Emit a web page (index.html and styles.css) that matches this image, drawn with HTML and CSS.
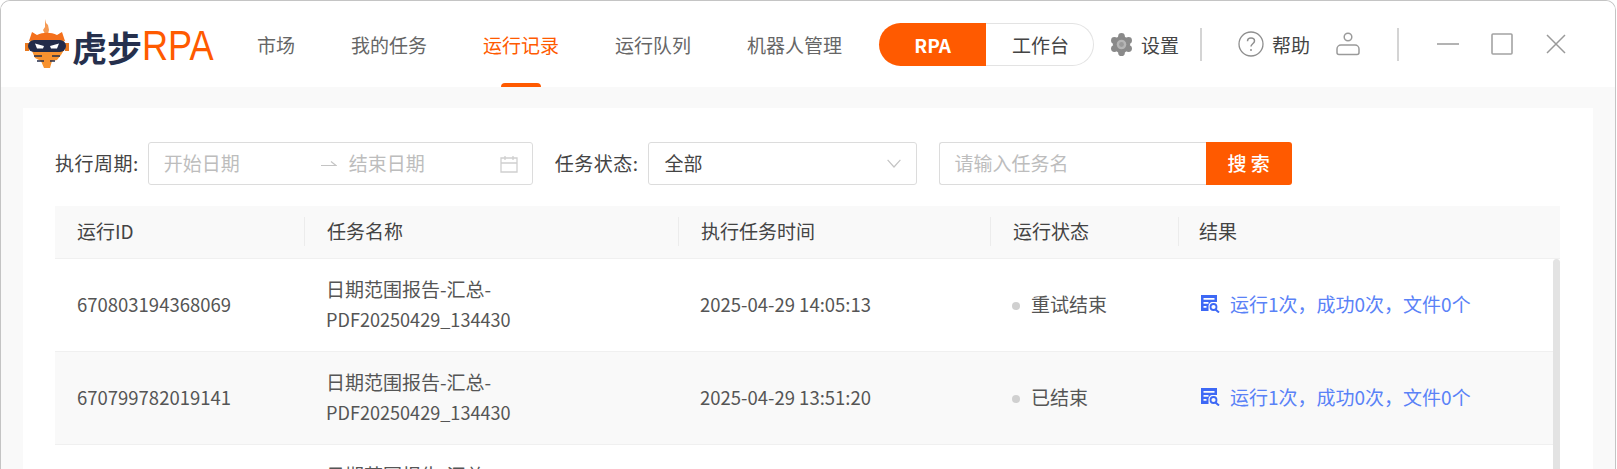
FILE: index.html
```html
<!DOCTYPE html>
<html lang="zh-CN">
<head>
    <meta charset="UTF-8">
    <meta name="viewport" content="width=device-width, initial-scale=1.0">
    <title>虎步RPA</title>
    <link rel="stylesheet" href="styles.css">
</head>
<body>
    <div class="window">
        <header class="topbar">
            <div class="logo">
                <svg class="logo-mark" viewBox="0 0 44 50" width="44" height="50" aria-hidden="true">
                    <path d="M20 0l1 4 2 2 1 5-1 4h-3l-2-4 2-3z" fill="#f59a54"/>
                    <path d="M7 13l5 3c6-3 14-3 20 0l5-3 3 9H4z" fill="#f4701c"/>
                    <path d="M5 21h34v10l-3 5-4 5-5 1-2 7h-6l-3-7-6-3-3-7z" fill="#f8922f"/>
                    <path d="M0 24h4v8H0zM40 24h4v8h-4z" fill="#e9791f"/>
                    <rect x="3" y="21" width="38" height="12" rx="6" fill="#232c4a"/>
                    <path d="M10 24.500l9 2.500-1 2.500h-6zM34 24.500l-9 2.500 1 2.500h6z" fill="#fff"/>
                    <path d="M9 36h8v2H9zM27 36h8v2h-8zM12 41h7v2h-7zM25 41h5v2h-5z" fill="#232c4a" opacity="0.750"/>
                </svg>
                <span class="logo-cn">虎步</span>
                <span class="logo-en">RPA</span>
            </div>
            <nav class="nav">
                <a class="nav-item">市场</a>
                <a class="nav-item">我的任务</a>
                <a class="nav-item active">运行记录</a>
                <a class="nav-item">运行队列</a>
                <a class="nav-item">机器人管理</a>
            </nav>
            <div class="switch">
                <span class="switch-on">RPA</span>
                <span class="switch-off">工作台</span>
            </div>
            <div class="tools">
                <a class="tool tool-settings">
                    <svg viewBox="0 0 24 24" width="23" height="23" aria-hidden="true">
                        <g fill="#8a8a8a">
                            <circle cx="12" cy="12" r="9"/>
                            <circle cx="12" cy="3.500" r="3.500"/>
                            <circle cx="12" cy="20.500" r="3.500"/>
                            <circle cx="4.600" cy="7.750" r="3.500"/>
                            <circle cx="19.400" cy="7.750" r="3.500"/>
                            <circle cx="4.600" cy="16.250" r="3.500"/>
                            <circle cx="19.400" cy="16.250" r="3.500"/>
                        </g>
                        <circle cx="12" cy="12" r="5" fill="#b5b5b5"/>
                        <circle cx="12" cy="12" r="2.500" fill="#9a9a9a"/>
                    </svg>
                    设置
                </a>
                <span class="divider divider-one"></span>
                <a class="tool tool-help">
                    <svg viewBox="0 0 26 26" width="26" height="26" aria-hidden="true">
                        <circle cx="13" cy="13" r="12" fill="none" stroke="#8f8f8f" stroke-width="1.300"/>
                        <path d="M9.500 10.200c0-2 1.500-3.200 3.500-3.200s3.500 1.300 3.500 3c0 2.700-3.500 2.800-3.500 5.500" fill="none" stroke="#8f8f8f" stroke-width="1.500"/>
                        <circle cx="13" cy="19" r="1" fill="#8f8f8f"/>
                    </svg>
                    帮助
                </a>
                <svg class="user-icon" viewBox="0 0 24 24" width="24" height="24" aria-hidden="true">
                    <circle cx="12" cy="5" r="3.800" fill="none" stroke="#9a9a9a" stroke-width="1.500"/>
                    <path d="M5 13h14a4 4 0 0 1 4 4v3.500a2 2 0 0 1-2 2H3a2 2 0 0 1-2-2V17a4 4 0 0 1 4-4z" fill="none" stroke="#9a9a9a" stroke-width="1.500"/>
                </svg>
                <span class="divider divider-two"></span>
                <svg class="win-min" viewBox="0 0 22 22" width="22" height="22" aria-hidden="true">
                    <path d="M0 11h22" stroke="#9a9a9a" stroke-width="1.500"/>
                </svg>
                <svg class="win-max" viewBox="0 0 22 22" width="22" height="22" aria-hidden="true">
                    <rect x="1" y="1" width="20" height="20" rx="1" fill="none" stroke="#a3a3a3" stroke-width="1.600"/>
                </svg>
                <svg class="win-close" viewBox="0 0 20 20" width="20" height="20" aria-hidden="true">
                    <path d="M1 1l18 18M19 1L1 19" stroke="#9a9a9a" stroke-width="1.500"/>
                </svg>
            </div>
        </header>

        <main class="content">
            <section class="card">
                <div class="filters">
                    <label class="filter-label">执行周期:</label>
                    <div class="field date-range">
                        <span class="placeholder date-start">开始日期</span>
                        <svg class="date-arrow" viewBox="0 0 16 8" width="16" height="8" aria-hidden="true">
                            <path d="M0 5.500h15L10 1.500" fill="none" stroke="#c4c4c4" stroke-width="1.200"/>
                        </svg>
                        <span class="placeholder date-end">结束日期</span>
                        <svg class="date-icon" viewBox="0 0 18 18" width="18" height="18" aria-hidden="true">
                            <path d="M1 3h16v14H1zM1 8h16M5 1v4M13 1v4" fill="none" stroke="#cfcfcf" stroke-width="1.300"/>
                        </svg>
                    </div>
                    <label class="filter-label status-label">任务状态:</label>
                    <div class="field select">
                        <span>全部</span>
                        <svg viewBox="0 0 14 9" width="14" height="9" aria-hidden="true">
                            <path d="M.6.8L7 8 13.400.8" fill="none" stroke="#c4c4c4" stroke-width="1.200"/>
                        </svg>
                    </div>
                    <div class="search">
                        <div class="field search-input"><span class="placeholder">请输入任务名</span></div>
                        <button class="search-btn">搜 索</button>
                    </div>
                </div>

                <div class="table-head">
                    <div class="cell col-id">运行ID</div>
                    <div class="cell col-name">任务名称</div>
                    <div class="cell col-time">执行任务时间</div>
                    <div class="cell col-state">运行状态</div>
                    <div class="cell col-result">结果</div>
                </div>
                <div class="table-body">
                    <div class="rows">
                        <div class="row">
                            <div class="cell col-id num">670803194368069</div>
                            <div class="cell col-name">日期范围报告-汇总-<br><span class="code">PDF20250429_134430</span></div>
                            <div class="cell col-time num">2025-04-29 14:05:13</div>
                            <div class="cell col-state"><i class="dot"></i>重试结束</div>
                            <div class="cell col-result">
                                <a class="result-link">
                                    <svg viewBox="0 0 19 18" width="19" height="18" aria-hidden="true">
                                        <path fill="#3d68f5" d="M0 0h16v7h-5.500A5 5 0 0 0 7.500 12v4H0zM2.500 3v1.800h11V3zM2.500 7v1.800h5V7zM2.500 11v1.800h3V11z"/>
                                        <circle cx="12.500" cy="12" r="3" fill="none" stroke="#3d68f5" stroke-width="1.800"/>
                                        <path d="M14.500 14.500l3.500 3" stroke="#3d68f5" stroke-width="2"/>
                                    </svg>
                                    运行1次，成功0次，文件0个
                                </a>
                            </div>
                        </div>
                        <div class="row row-alt">
                            <div class="cell col-id num">670799782019141</div>
                            <div class="cell col-name">日期范围报告-汇总-<br><span class="code">PDF20250429_134430</span></div>
                            <div class="cell col-time num">2025-04-29 13:51:20</div>
                            <div class="cell col-state"><i class="dot"></i>已结束</div>
                            <div class="cell col-result">
                                <a class="result-link">
                                    <svg viewBox="0 0 19 18" width="19" height="18" aria-hidden="true">
                                        <path fill="#3d68f5" d="M0 0h16v7h-5.500A5 5 0 0 0 7.500 12v4H0zM2.500 3v1.800h11V3zM2.500 7v1.800h5V7zM2.500 11v1.800h3V11z"/>
                                        <circle cx="12.500" cy="12" r="3" fill="none" stroke="#3d68f5" stroke-width="1.800"/>
                                        <path d="M14.500 14.500l3.500 3" stroke="#3d68f5" stroke-width="2"/>
                                    </svg>
                                    运行1次，成功0次，文件0个
                                </a>
                            </div>
                        </div>
                        <div class="row">
                            <div class="cell col-id num">670795210847732</div>
                            <div class="cell col-name">日期范围报告-汇总-<br><span class="code">PDF20250429_134430</span></div>
                            <div class="cell col-time num">2025-04-29 13:36:02</div>
                            <div class="cell col-state"><i class="dot"></i>已结束</div>
                        </div>
                    </div>
                    <div class="scrollbar"></div>
                </div>
            </section>
        </main>
    </div>
</body>
</html>
```

FILE: styles.css
```css
* {
    margin: 0;
    padding: 0;
    box-sizing: border-box;
    font-family: "Noto Sans CJK SC", "Noto Sans", sans-serif;
}

html, body {
    height: 469px;
    overflow: hidden;
    background-color: #fff;
}

.window {
    width: 1616px;
    height: 469px;
    border: 1px solid #c4c4c4;
    border-bottom: none;
    border-radius: 10px 10px 0 0;
    background-color: #f9f9f9;
    overflow: hidden;
}

.topbar {
    height: 86px;
    background-color: #fff;
    display: flex;
    align-items: center;
}

.logo {
    width: 256px;
    padding-left: 24px;
    display: flex;
    align-items: center;
    height: 100%;
    flex-shrink: 0;
}

.logo-mark {
    flex-shrink: 0;
}

.logo-cn {
    margin-left: 3px;
    font-size: 35px;
    font-weight: 700;
    color: #26304d;
    line-height: 1;
    margin-top: 4px;
}

.logo-en {
    font-family: "Liberation Sans", sans-serif;
    font-size: 42px;
    line-height: 1;
    color: #ff5a00;
    transform: scaleX(0.86);
    transform-origin: left center;
    margin-top: 4px;
}

.nav {
    display: flex;
    gap: 56px;
    height: 100%;
}

.nav-item {
    height: 100%;
    display: flex;
    align-items: center;
    font-size: 19px;
    color: #666;
    border-bottom: 4px solid transparent;
    padding-top: 4px;
    position: relative;
}

.nav-item.active {
    color: #ff5a00;
}

.nav-item.active::after {
    content: "";
    position: absolute;
    left: 18px;
    right: 18px;
    bottom: -4px;
    height: 4px;
    border-radius: 4px 4px 0 0;
    background-color: #ff5a00;
}

.switch {
    margin-left: 37px;
    width: 215px;
    height: 43px;
    display: flex;
    flex-shrink: 0;
    font-size: 19px;
}

.switch-on {
    width: 107px;
    background-color: #ff5a00;
    color: #fff;
    font-weight: 700;
    border-radius: 22px 0 0 22px;
    display: flex;
    align-items: center;
    justify-content: center;
}

.switch-off {
    flex: 1;
    border: 1px solid #e3e3e3;
    border-left: none;
    border-radius: 0 22px 22px 0;
    color: #444;
    display: flex;
    align-items: center;
    justify-content: center;
    padding-left: 2px;
}

.tools {
    display: flex;
    align-items: center;
    flex-shrink: 0;
}

.tool {
    display: flex;
    align-items: center;
    gap: 8px;
    font-size: 19px;
    color: #444;
}

.tool-settings {
    margin-left: 16px;
}

.divider {
    width: 2px;
    height: 33px;
    background-color: #d4d4d4;
}

.divider-one {
    margin-left: 21px;
}

.tool-help {
    margin-left: 36px;
}

.user-icon {
    margin-left: 26px;
}

.divider-two {
    margin-left: 37px;
}

.win-min {
    margin-left: 38px;
}

.win-max {
    margin-left: 32px;
}

.win-close {
    margin-left: 33px;
}

.content {
    padding: 21px 22px 0 22px;
    height: 100%;
}

.card {
    background-color: #fff;
    padding: 34px 33px 0 32px;
    height: 100%;
}

.filters {
    height: 43px;
    display: flex;
    align-items: center;
    font-size: 19px;
}

.filter-label {
    color: #444;
    white-space: nowrap;
    letter-spacing: 0.5px;
    padding-bottom: 3px;
}

.field {
    height: 43px;
    border: 1px solid #dcdcdc;
    border-radius: 3px;
    display: flex;
    align-items: center;
    background-color: #fff;
}

.field span {
    padding-bottom: 3px;
}

.placeholder {
    color: #bdbdbd;
}

.date-range {
    margin-left: 9px;
    width: 385px;
    padding-left: 15px;
}

.date-arrow {
    margin-left: 81px;
    flex-shrink: 0;
}

.date-end {
    margin-left: 12px;
}

.date-icon {
    margin-left: 75px;
    flex-shrink: 0;
}

.status-label {
    margin-left: 22px;
}

.select {
    margin-left: 9px;
    width: 269px;
    padding: 0 15px 0 16px;
    justify-content: space-between;
    color: #444;
}

.search {
    margin-left: 22px;
    display: flex;
}

.search-input {
    width: 267px;
    padding-left: 15px;
    border-right: none;
    border-radius: 3px 0 0 3px;
}

.search-btn {
    width: 86px;
    height: 43px;
    border: none;
    border-radius: 0 3px 3px 0;
    background-color: #ff5a00;
    color: #fff;
    font-size: 19px;
    font-weight: 500;
    padding-bottom: 3px;
}

.table-head {
    margin-top: 21px;
    height: 53px;
    padding-bottom: 1px;
    background-color: #f9f9f9;
    border-bottom: 1px solid #f0f0f0;
    display: flex;
    align-items: center;
    font-size: 19px;
    color: #444;
}

.table-head .cell {
    height: 29px;
    line-height: 27px;
    border-left: 1px solid #ececec;
}

.table-head .cell:first-child {
    border-left: none;
}

.table-head .col-result {
    padding-left: 20px;
}

.cell {
    padding-left: 22px;
    flex-shrink: 0;
}

.col-id {
    width: 249px;
}

.col-name {
    width: 374px;
}

.col-time {
    width: 312px;
}

.col-state {
    width: 188px;
}

.col-result {
    flex: 1;
    padding-left: 23px;
}

.table-body {
    display: flex;
}

.rows {
    flex: 1;
}

.row {
    height: 93px;
    padding-bottom: 2px;
    border-bottom: 1px solid #f0f0f0;
    display: flex;
    align-items: center;
    font-size: 19px;
    line-height: 30px;
    color: #555;
}

.row .num {
    font-size: 18.500px;
}

.row .code {
    font-size: 18.100px;
}

.row-alt {
    background-color: #f9f9f9;
}

.dot {
    display: inline-block;
    width: 8px;
    height: 8px;
    border-radius: 50%;
    background-color: #d0d0d0;
    margin-right: 11px;
    vertical-align: 2px;
}

.result-link {
    display: flex;
    align-items: center;
    gap: 10px;
    color: #5a82f7;
}

.scrollbar {
    width: 7px;
    height: 300px;
    background-color: #e3e3e3;
    border-radius: 4px 4px 0 0;
}
```
